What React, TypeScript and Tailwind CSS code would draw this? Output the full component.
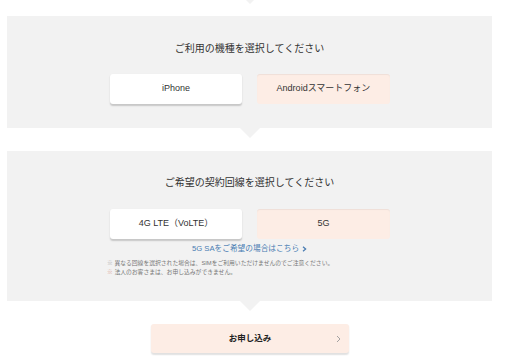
const font = { fontFamily: '"Liberation Sans", "Noto Sans CJK JP", sans-serif' };

function Arrow({ className }: { className: string }) {
  // downward pointer under each gray panel
  return (
    <div className={`flex justify-center ${className}`}>
      <div className="w-0 h-0 border-l-[10px] border-r-[10px] border-t-[10px] border-l-transparent border-r-transparent border-t-[#f2f2f2]" />
    </div>
  );
}

function Choice({ label, selected }: { label: string; selected?: boolean }) {
  return (
    <div
      className={
        selected
          ? 'w-[133px] h-[30px] flex items-center justify-center rounded-[3px] bg-[#fdede5] shadow-[inset_0_1px_1px_rgba(0,0,0,0.06)] text-[9px] text-[#333]'
          : 'w-[132px] h-[30px] flex items-center justify-center rounded-[3px] bg-white shadow-[0_1.5px_1.5px_rgba(0,0,0,0.18)] text-[9px] text-[#333]'
      }
    >
      {label}
    </div>
  );
}

export default function App() {
  return (
    <div className="w-[512px] h-[364px] bg-white overflow-hidden" style={font}>
      <div className="ml-[7px] w-[485px] -mt-[6px]">
        <Arrow className="h-[10px]" />
      </div>
      <div className="ml-[7px] w-[485px] mt-[12px]">
        <div className="bg-[#f2f2f2] h-[112px] flex flex-col items-center">
          <p className="mt-[27px] text-[10px] leading-[12px] text-[#333]">ご利用の機種を選択してください</p>
          <div className="mt-[19px] flex gap-[15px] pl-[1px]">
            <Choice label="iPhone" />
            <Choice label="Androidスマートフォン" selected />
          </div>
        </div>
        <Arrow className="h-[10px]" />

        <div className="mt-[13px] bg-[#f2f2f2] h-[150px] flex flex-col items-center">
          <p className="mt-[26px] text-[10px] leading-[12px] text-[#333]">ご希望の契約回線を選択してください</p>
          <div className="mt-[20px] flex gap-[15px] pl-[1px]">
            <Choice label="4G LTE（VoLTE）" />
            <Choice label="5G" selected />
          </div>
          <div className="mt-[5px] flex items-center gap-[3px] text-[7.7px] leading-[10px] text-[#4a7db3]">
            <span>5G SAをご希望の場合はこちら</span>
            <svg width="5" height="6" viewBox="0 0 5 6">
              <path d="M1 0.8 L3.6 3 L1 5.2" fill="none" stroke="#4a7db3" strokeWidth="1.3" />
            </svg>
          </div>
          <div className="self-start ml-[100px] mt-[5px] text-[5.8px] leading-[9px] text-[#777]">
            <p><span className="text-[#aaa]">※</span> 異なる回線を選択された場合は、SIMをご利用いただけませんのでご注意ください。</p>
            <p><span className="text-[#d9a08c]">※</span> 法人のお客さまは、お申し込みができません。</p>
          </div>
        </div>
        <Arrow className="h-[10px]" />
      </div>

      <div className="mt-[13px] ml-[151px] w-[198px] h-[29px] rounded-[3px] bg-[#fdede5] shadow-[0_1.5px_1.5px_rgba(0,0,0,0.12)] flex items-center justify-center relative">
        <span className="text-[8.5px] font-bold text-[#222]">お申し込み</span>
        <svg className="absolute right-[8px] top-[11px]" width="5" height="8" viewBox="0 0 5 8">
          <path d="M1 1 L4 4 L1 7" fill="none" stroke="#999" strokeWidth="0.9" />
        </svg>
      </div>
    </div>
  );
}
